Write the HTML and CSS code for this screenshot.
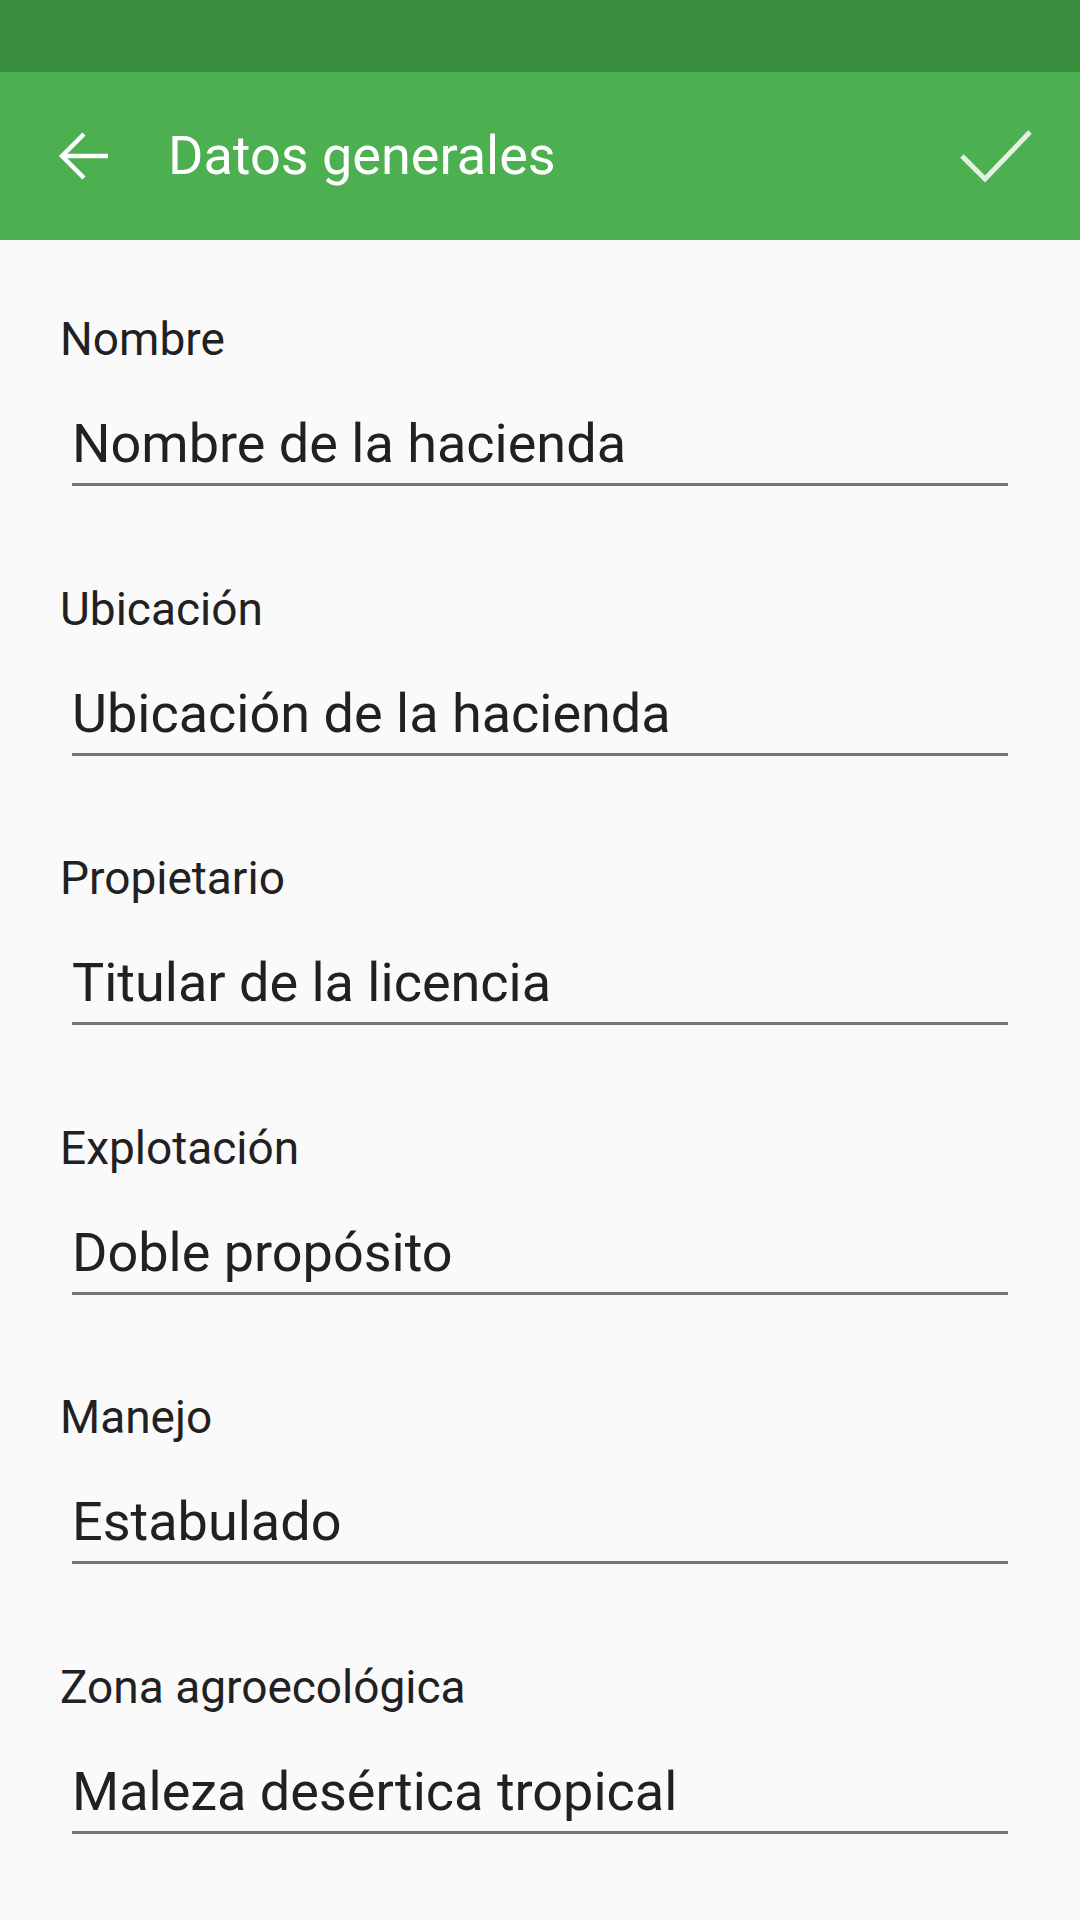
FILE: index.html
```html
<!DOCTYPE html>
<html lang="es">
<head>
<meta charset="utf-8">
<title>Datos generales</title>
<link rel="stylesheet" href="styles.css">
</head>
<body>
<div class="statusbar"></div>
<header class="toolbar">
  <div class="nav-icon">
    <svg width="72" height="72" viewBox="0 0 72 72"><polyline points="48,14 26,36 48,58" fill="none" stroke="#fff" stroke-width="4.5"/><line x1="27" y1="36" x2="72" y2="36" stroke="#fff" stroke-width="4.5"/></svg>
  </div>
  <h1 class="title">Datos generales</h1>
  <div class="action-icon">
    <svg width="80" height="60" viewBox="0 0 80 60"><polyline points="3,27 26,50 71,3" fill="none" stroke="#e2f1e2" stroke-width="5"/></svg>
  </div>
</header>
<main class="form">
  <div class="field">
    <label class="label">Nombre</label>
    <div class="input">Nombre de la hacienda</div>
  </div>
  <div class="field">
    <label class="label">Ubicación</label>
    <div class="input">Ubicación de la hacienda</div>
  </div>
  <div class="field">
    <label class="label">Propietario</label>
    <div class="input">Titular de la licencia</div>
  </div>
  <div class="field">
    <label class="label">Explotación</label>
    <div class="input">Doble propósito</div>
  </div>
  <div class="field">
    <label class="label">Manejo</label>
    <div class="input">Estabulado</div>
  </div>
  <div class="field">
    <label class="label">Zona agroecológica</label>
    <div class="input">Maleza desértica tropical</div>
  </div>
</main>
</body>
</html>
```

FILE: styles.css
```css
html, body {
  margin: 0;
  padding: 0;
}
body {
  width: 1080px;
  height: 1920px;
  background: #fafafa;
  font-family: Roboto, "Noto Sans", sans-serif;
  color: #212121;
  overflow: hidden;
}
.statusbar {
  height: 72px;
  background: #388e3c;
}
.toolbar {
  height: 168px;
  background: #4caf50;
  display: flex;
  align-items: center;
}
.nav-icon {
  width: 72px;
  height: 72px;
  margin-left: 36px;
}
.nav-icon svg {
  display: block;
}
.title {
  margin: 0 0 0 60px;
  font-weight: 400;
  font-size: 54px;
  line-height: 72px;
  color: #ffffff;
  flex: 1;
}
.action-icon {
  width: 80px;
  height: 60px;
  margin-right: 41px;
  margin-top: 5px;
}
.action-icon svg {
  display: block;
}
.form {
  padding-top: 69px;
  display: flex;
  flex-direction: column;
}
.field {
  display: flex;
  flex-direction: column;
  height: 269.5px;
}
.label {
  display: block;
  margin-left: 60px;
  font-size: 46px;
  line-height: 60px;
  color: #212121;
}
.input {
  margin: 40px 72px 0 72px;
  font-size: 54px;
  line-height: 70px;
  padding-bottom: 4px;
  border-bottom: 3px solid #757575;
  color: #212121;
}
```
